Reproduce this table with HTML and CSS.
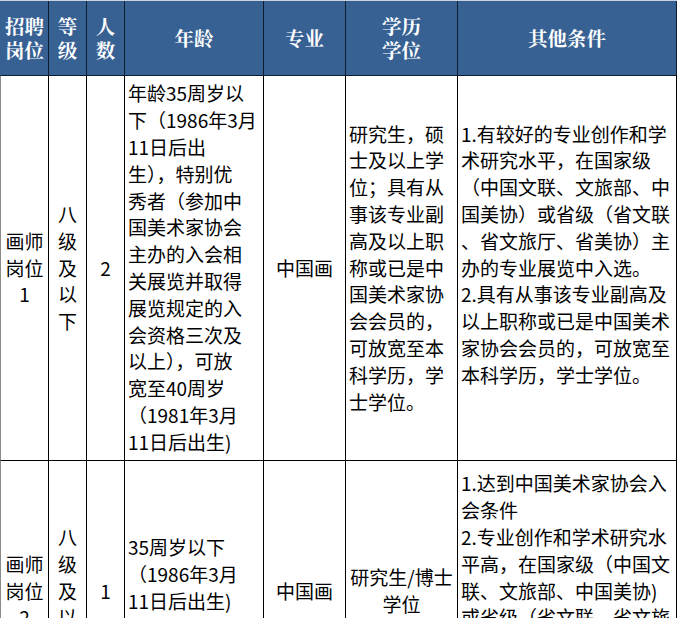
FILE: index.html
```html
<!DOCTYPE html>
<html lang="zh-CN">
<head>
<meta charset="utf-8">
<title>招聘岗位</title>
<link rel="stylesheet" href="styles.css">
</head>
<body>
<table class="grid">
  <colgroup>
    <col class="c1"><col class="c2"><col class="c3"><col class="c4"><col class="c5"><col class="c6"><col class="c7">
  </colgroup>
  <thead>
    <tr class="head">
      <th class="first">招聘<br>岗位</th>
      <th>等<br>级</th>
      <th>人<br>数</th>
      <th>年龄</th>
      <th>专业</th>
      <th>学历<br>学位</th>
      <th>其他条件</th>
    </tr>
  </thead>
  <tbody>
    <tr class="row1">
      <td class="first center">画师<br>岗位<br>1</td>
      <td class="center">八<br>级<br>及<br>以<br>下</td>
      <td class="center">2</td>
      <td class="left">年龄35周岁以<br>下（1986年3月<br>11日后出<br>生），特别优<br>秀者（参加中<br>国美术家协会<br>主办的入会相<br>关展览并取得<br>展览规定的入<br>会资格三次及<br>以上），可放<br>宽至40周岁<br>（1981年3月<br>11日后出生)</td>
      <td class="center">中国画</td>
      <td class="left">研究生，硕<br>士及以上学<br>位；具有从<br>事该专业副<br>高及以上职<br>称或已是中<br>国美术家协<br>会会员的，<br>可放宽至本<br>科学历，学<br>士学位。</td>
      <td class="left">1.有较好的专业创作和学<br>术研究水平，在国家级<br>（中国文联、文旅部、中<br>国美协）或省级（省文联<br>、省文旅厅、省美协）主<br>办的专业展览中入选。<br>2.具有从事该专业副高及<br>以上职称或已是中国美术<br>家协会会员的，可放宽至<br>本科学历，学士学位。<br>&nbsp;</td>
    </tr>
    <tr class="row2">
      <td class="first center">画师<br>岗位<br>2</td>
      <td class="center">八<br>级<br>及<br>以<br>下</td>
      <td class="center">1</td>
      <td class="left lift">35周岁以下<br>（1986年3月<br>11日后出生)<br>&nbsp;</td>
      <td class="center">中国画</td>
      <td class="center">研究生/博士<br>学位</td>
      <td class="left">1.达到中国美术家协会入<br>会条件<br>2.专业创作和学术研究水<br>平高，在国家级（中国文<br>联、文旅部、中国美协)<br>或省级（省文联、省文旅<br>厅、省美协）主办的专业<br>展览中入选两次以上。<br>&nbsp;</td>
    </tr>
  </tbody>
</table>
</body>
</html>
```

FILE: styles.css
```css
html, body {
  margin: 0;
  padding: 0;
  background: #ffffff;
}

body {
  width: 677px;
  height: 618px;
  overflow: hidden;
  font-family: "Noto Sans CJK SC", "Noto Sans", sans-serif;
}

.grid {
  table-layout: fixed;
  width: 677px;
  border-collapse: separate;
  border-spacing: 0;
  border-top: 1px solid #c9d3e0;
}

.c1 { width: 49px; }
.c2 { width: 38px; }
.c3 { width: 38px; }
.c4 { width: 139px; }
.c5 { width: 82px; }
.c6 { width: 112px; }
.c7 { width: 219px; }

.grid th,
.grid td {
  padding: 0;
  border-right: 1px solid #000;
  border-bottom: 1px solid #000;
  vertical-align: middle;
  white-space: nowrap;
  overflow: hidden;
}

.grid .first {
  border-left: 1px solid #8a8a8a;
}

.head th {
  height: 75px;
  box-sizing: border-box;
  background: #386193;
  color: #ffffff;
  font-family: "Noto Serif CJK SC", "Noto Sans CJK SC", serif;
  font-weight: 700;
  font-size: 19.5px;
  line-height: 24px;
  text-align: center;
  border-right-color: #0f1c30;
  border-bottom-color: #0f1c30;
}

.head .first {
  border-left-color: #386193;
}

.grid td {
  color: #000000;
  font-size: 19px;
  line-height: 26.8px;
}

.row1 td {
  height: 384px;
}

.row2 td {
  height: 253px;
}

.center {
  text-align: center;
}

.left {
  text-align: left;
  padding-left: 3px !important;
}

.lift {
  padding-bottom: 7px !important;
}
```
